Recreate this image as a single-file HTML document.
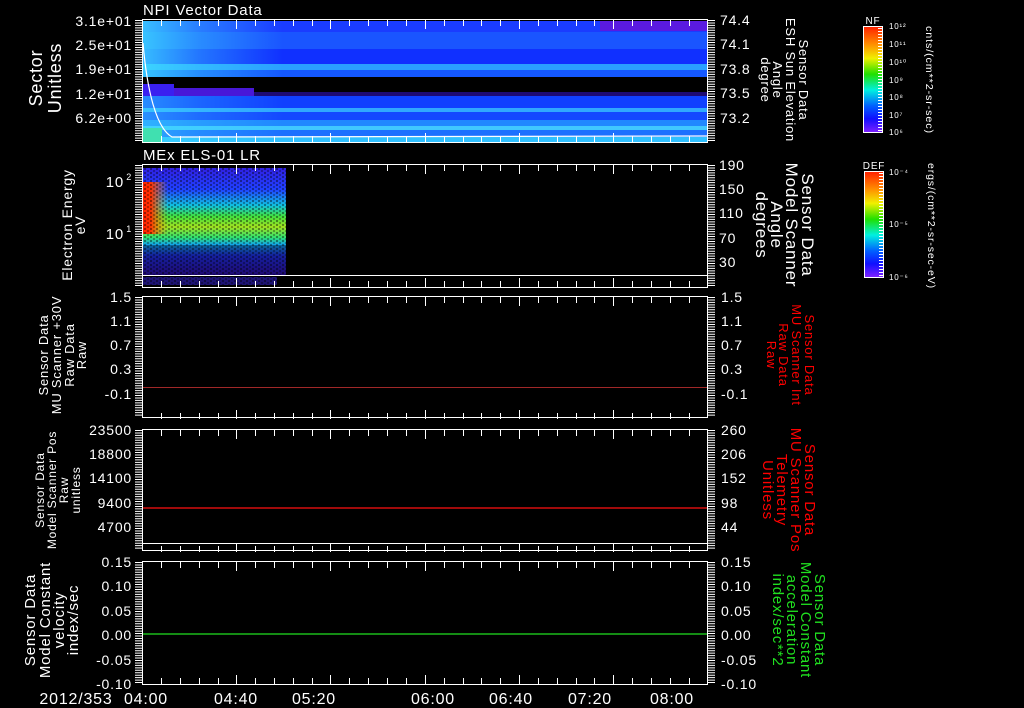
<!DOCTYPE html>
<html><head><meta charset="utf-8"><style>
html,body{margin:0;padding:0;background:#000;width:1024px;height:708px;overflow:hidden}
svg{display:block}
text{font-family:"Liberation Sans",sans-serif;fill:#fff;letter-spacing:0.8px}
</style></head><body>
<svg width="1024" height="708" viewBox="0 0 1024 708" xmlns="http://www.w3.org/2000/svg">
<defs>
<linearGradient id="cb" x1="0" y1="0" x2="0" y2="1">
<stop offset="0" stop-color="#ff2000"/><stop offset="0.17" stop-color="#ff9000"/><stop offset="0.3" stop-color="#f0f000"/><stop offset="0.45" stop-color="#20e000"/><stop offset="0.6" stop-color="#00f0e0"/><stop offset="0.75" stop-color="#0060ff"/><stop offset="0.87" stop-color="#1010ff"/><stop offset="1" stop-color="#8020ff"/>
</linearGradient>
<linearGradient id="p1l" x1="0" y1="0" x2="1" y2="0">
<stop offset="0" stop-color="#40e0ff" stop-opacity="0.8"/><stop offset="0.1" stop-color="#40e0ff" stop-opacity="0.4"/><stop offset="0.25" stop-color="#40e0ff" stop-opacity="0"/>
</linearGradient>
<linearGradient id="p2v" x1="0" y1="0" x2="0" y2="1">
<stop offset="0" stop-color="#3020e0"/><stop offset="0.2" stop-color="#2040ff"/><stop offset="0.35" stop-color="#10c0e0"/><stop offset="0.45" stop-color="#40e040"/><stop offset="0.55" stop-color="#a0e020"/><stop offset="0.65" stop-color="#30e070"/><stop offset="0.72" stop-color="#10a0f0"/><stop offset="0.82" stop-color="#2030f0"/><stop offset="1" stop-color="#3010b0"/>
</linearGradient>
<linearGradient id="p2r" x1="0" y1="0" x2="1" y2="0">
<stop offset="0" stop-color="#ff2000"/><stop offset="0.06" stop-color="#ff3000"/><stop offset="0.18" stop-color="#ffa000" stop-opacity="0"/>
</linearGradient>
<pattern id="noise" width="6" height="4" patternUnits="userSpaceOnUse">
<rect x="0" y="0" width="2" height="2" fill="#000" opacity="0.4"/><rect x="3" y="2" width="2" height="2" fill="#000" opacity="0.3"/>
</pattern>
</defs>

<g>
<rect x="142" y="21" width="565" height="11" fill="#1a3cff"/>
<rect x="142" y="32" width="565" height="17" fill="#1a55ff"/>
<rect x="142" y="49" width="565" height="15" fill="#1030ff"/>
<rect x="142" y="64" width="565" height="6" fill="#2aa0ff"/>
<rect x="142" y="70" width="565" height="7" fill="#1458ff"/>
<rect x="142" y="21" width="565" height="56" fill="url(#p1l)"/>
<rect x="142" y="77" width="565" height="7" fill="#000"/>
<rect x="142" y="84" width="565" height="12" fill="#000"/>
<rect x="142" y="84" width="32" height="12" fill="#3a20f0"/>
<rect x="174" y="88" width="80" height="8" fill="#4818d8"/>
<rect x="254" y="92" width="453" height="4" fill="#3010c0" opacity="0.6"/>
<rect x="142" y="96" width="565" height="12" fill="#1040ff"/>
<rect x="142" y="108" width="565" height="4" fill="#30a8ff"/>
<rect x="142" y="112" width="565" height="8" fill="#1448ff"/>
<rect x="142" y="120" width="565" height="6" fill="#2088ff"/>
<rect x="142" y="126" width="565" height="4" fill="#40c8ff"/>
<rect x="142" y="130" width="565" height="7" fill="#1c70ff"/>
<rect x="142" y="137" width="565" height="5" fill="#30c0ff"/>
<rect x="142" y="96" width="565" height="46" fill="url(#p1l)" opacity="0.6"/>
<rect x="600" y="21" width="107" height="10" fill="#5a1ae0"/>
<rect x="142" y="128" width="20" height="14" fill="#40e0b0"/>
<path d="M143,43 C147,90 156,128 172,137 L707,136" stroke="#fff" stroke-width="1.2" fill="none"/>
</g>

<rect x="142" y="168" width="144" height="107" fill="url(#p2v)"/>
<rect x="142" y="182" width="144" height="52" fill="url(#p2r)"/>
<rect x="142" y="168" width="144" height="107" fill="url(#noise)"/>
<rect x="142" y="245" width="144" height="30" fill="#000" opacity="0.35"/>
<rect x="142" y="277" width="135" height="8" fill="#3020c0" opacity="0.6"/>
<rect x="142" y="277" width="135" height="8" fill="url(#noise)"/>
<line x1="142" y1="275.5" x2="707" y2="275.5" stroke="#fff"/>

<line x1="142" y1="387.5" x2="707" y2="387.5" stroke="#a02828" stroke-width="1"/>
<line x1="142" y1="508" x2="707" y2="508" stroke="#ff1010" stroke-width="1.3"/>
<line x1="142" y1="543.5" x2="707" y2="543.5" stroke="#fff" stroke-width="1"/>
<line x1="142" y1="634" x2="707" y2="634" stroke="#20e020" stroke-width="1.3"/>

<g stroke="#fff" fill="none" stroke-width="1">
<rect x="142.5" y="19.5" width="565" height="123"/>
<rect x="142.5" y="164.5" width="565" height="123"/>
<rect x="142.5" y="296.5" width="565" height="121"/>
<rect x="142.5" y="429.5" width="565" height="121"/>
<rect x="142.5" y="561.5" width="565" height="123"/>
<g stroke-dasharray="1,1.45" stroke-width="7">
<line x1="138.5" y1="20" x2="138.5" y2="142"/><line x1="711.5" y1="20" x2="711.5" y2="142"/>
<line x1="138.5" y1="165" x2="138.5" y2="287"/><line x1="711.5" y1="165" x2="711.5" y2="287"/>
<line x1="138.5" y1="297" x2="138.5" y2="417"/><line x1="711.5" y1="297" x2="711.5" y2="417"/>
<line x1="138.5" y1="430" x2="138.5" y2="550"/><line x1="711.5" y1="430" x2="711.5" y2="550"/>
<line x1="138.5" y1="562" x2="138.5" y2="684"/><line x1="711.5" y1="562" x2="711.5" y2="684"/>
</g>
</g>
<g stroke="#fff" stroke-width="1" id="xt">
<path d="M161.5,20v6M180.5,20v6M199.5,20v6M218.5,20v6M236.5,20v9M255.5,20v6M274.5,20v6M293.5,20v6M312.5,20v6M330.5,20v9M349.5,20v6M368.5,20v6M387.5,20v6M406.5,20v6M425.5,20v9M444.5,20v6M463.5,20v6M481.5,20v6M500.5,20v6M519.5,20v9M538.5,20v6M557.5,20v6M576.5,20v6M594.5,20v6M613.5,20v9M632.5,20v6M651.5,20v6M670.5,20v6M689.5,20v6"/>
<path transform="translate(0,122)" d="M161.5,20v-6M180.5,20v-6M199.5,20v-6M218.5,20v-6M236.5,20v-9M255.5,20v-6M274.5,20v-6M293.5,20v-6M312.5,20v-6M330.5,20v-9M349.5,20v-6M368.5,20v-6M387.5,20v-6M406.5,20v-6M425.5,20v-9M444.5,20v-6M463.5,20v-6M481.5,20v-6M500.5,20v-6M519.5,20v-9M538.5,20v-6M557.5,20v-6M576.5,20v-6M594.5,20v-6M613.5,20v-9M632.5,20v-6M651.5,20v-6M670.5,20v-6M689.5,20v-6"/>
</g>
<use href="#xt" transform="translate(0,145)"/>
<use href="#xt" transform="translate(0,277)"/>
<use href="#xt" transform="translate(0,410)"/>
<use href="#xt" transform="translate(0,542)"/>

<text x="143" y="15" font-size="15">NPI Vector Data</text>
<text x="143" y="160" font-size="15">MEx ELS-01 LR</text>

<g font-size="14" text-anchor="end">
<text x="132" y="26">3.1e+01</text><text x="132" y="50">2.5e+01</text><text x="132" y="74">1.9e+01</text><text x="132" y="99">1.2e+01</text><text x="132" y="123">6.2e+00</text>
<text x="124" y="187" font-size="15">10</text><text x="132" y="180" font-size="9">2</text>
<text x="124" y="239" font-size="15">10</text><text x="132" y="232" font-size="9">1</text>
<text x="132" y="302">1.5</text><text x="132" y="326">1.1</text><text x="132" y="350">0.7</text><text x="132" y="374">0.3</text><text x="132" y="399">-0.1</text>
<text x="132" y="435">23500</text><text x="132" y="459">18800</text><text x="132" y="483">14100</text><text x="132" y="508">9400</text><text x="132" y="532">4700</text>
<text x="132" y="567">0.15</text><text x="132" y="591">0.10</text><text x="132" y="616">0.05</text><text x="132" y="640">0.00</text><text x="132" y="665">-0.05</text><text x="132" y="689">-0.10</text>
</g>
<g font-size="14">
<text x="720" y="25">74.4</text><text x="720" y="49">74.1</text><text x="720" y="74">73.8</text><text x="720" y="98">73.5</text><text x="720" y="123">73.2</text>
<text x="719" y="170">190</text><text x="719" y="194">150</text><text x="719" y="218">110</text><text x="719" y="243">70</text><text x="719" y="267">30</text>
<text x="721" y="302">1.5</text><text x="721" y="326">1.1</text><text x="721" y="350">0.7</text><text x="721" y="374">0.3</text><text x="721" y="399">-0.1</text>
<text x="721" y="435">260</text><text x="721" y="459">206</text><text x="721" y="483">152</text><text x="721" y="508">98</text><text x="721" y="532">44</text>
<text x="721" y="567">0.15</text><text x="721" y="591">0.10</text><text x="721" y="616">0.05</text><text x="721" y="640">0.00</text><text x="721" y="665">-0.05</text><text x="721" y="689">-0.10</text>
</g>

<g font-size="16" text-anchor="middle">
<text x="76" y="704">2012/353</text>
<text x="146" y="704">04:00</text><text x="236" y="704">04:40</text><text x="314" y="704">05:20</text><text x="433" y="704">06:00</text><text x="511" y="704">06:40</text><text x="590" y="704">07:20</text><text x="672" y="704">08:00</text>
</g>

<g text-anchor="middle">
<text transform="translate(42,78) rotate(-90)" font-size="18"><tspan x="0" y="0">Sector</tspan><tspan x="0" y="19">Unitless</tspan></text>
<text transform="translate(72,225) rotate(-90)" font-size="14"><tspan x="0" y="0">Electron Energy</tspan><tspan x="0" y="13">eV</tspan></text>
<text transform="translate(48,355) rotate(-90)" font-size="13"><tspan x="0" y="0">Sensor Data</tspan><tspan x="0" y="13">MU Scanner +30V</tspan><tspan x="0" y="26">Raw Data</tspan><tspan x="0" y="38">Raw</tspan></text>
<text transform="translate(44,490) rotate(-90)" font-size="12"><tspan x="0" y="0">Sensor Data</tspan><tspan x="0" y="12">Model Scanner Pos</tspan><tspan x="0" y="24">Raw</tspan><tspan x="0" y="36">unitless</tspan></text>
<text transform="translate(35,620) rotate(-90)" font-size="15"><tspan x="0" y="0">Sensor Data</tspan><tspan x="0" y="15">Model Constant</tspan><tspan x="0" y="29">velocity</tspan><tspan x="0" y="43">index/sec</tspan></text>
</g>
<g text-anchor="middle">
<text transform="translate(799,80) rotate(90)" font-size="13"><tspan x="0" y="0">Sensor Data</tspan><tspan x="0" y="13">ESH Sun Elevation</tspan><tspan x="0" y="26">Angle</tspan><tspan x="0" y="38">degree</tspan></text>
<text transform="translate(802,225) rotate(90)" font-size="17"><tspan x="0" y="0">Sensor Data</tspan><tspan x="0" y="16">Model Scanner</tspan><tspan x="0" y="31">Angle</tspan><tspan x="0" y="46">degrees</tspan></text>
<text transform="translate(805,355) rotate(90)" font-size="13" style="fill:#ff0000"><tspan x="0" y="0">Sensor Data</tspan><tspan x="0" y="13">MU Scanner Int</tspan><tspan x="0" y="26">Raw Data</tspan><tspan x="0" y="38">Raw</tspan></text>
<text transform="translate(805,490) rotate(90)" font-size="15" style="fill:#ff0000"><tspan x="0" y="0">Sensor Data</tspan><tspan x="0" y="14">MU Scanner Pos</tspan><tspan x="0" y="28">Telemetry</tspan><tspan x="0" y="42">Unitless</tspan></text>
<text transform="translate(815,620) rotate(90)" font-size="15" style="fill:#20e020"><tspan x="0" y="0">Sensor Data</tspan><tspan x="0" y="14">Model Constant</tspan><tspan x="0" y="28">acceleration</tspan><tspan x="0" y="42">index/sec**2</tspan></text>
</g>

<rect x="863.5" y="26.5" width="19" height="106" fill="url(#cb)" stroke="#fff"/>
<rect x="864.5" y="171.5" width="19" height="106" fill="url(#cb)" stroke="#fff"/>
<g stroke="#fff" stroke-dasharray="1,2" stroke-width="4">
<line x1="880" y1="28" x2="880" y2="132"/><line x1="881" y1="173" x2="881" y2="277"/>
</g>
<text x="873" y="24" font-size="10" text-anchor="middle">NF</text>
<text x="874" y="169" font-size="10" text-anchor="middle">DEF</text>
<g font-size="8">
<text x="889" y="29">10¹²</text><text x="889" y="47">10¹¹</text><text x="889" y="65">10¹⁰</text><text x="889" y="83">10⁹</text><text x="889" y="100">10⁸</text><text x="889" y="118">10⁷</text><text x="889" y="135">10⁶</text>
<text x="889" y="175">10⁻⁴</text><text x="889" y="227">10⁻⁵</text><text x="889" y="280">10⁻⁶</text>
</g>
<text transform="translate(926,80) rotate(90)" font-size="10" text-anchor="middle" textLength="108" lengthAdjust="spacingAndGlyphs">cnts/(cm**2-sr-sec)</text>
<text transform="translate(928,226) rotate(90)" font-size="10" text-anchor="middle" textLength="126" lengthAdjust="spacingAndGlyphs">ergs/(cm**2-sr-sec-eV)</text>
</svg>
</body></html>
